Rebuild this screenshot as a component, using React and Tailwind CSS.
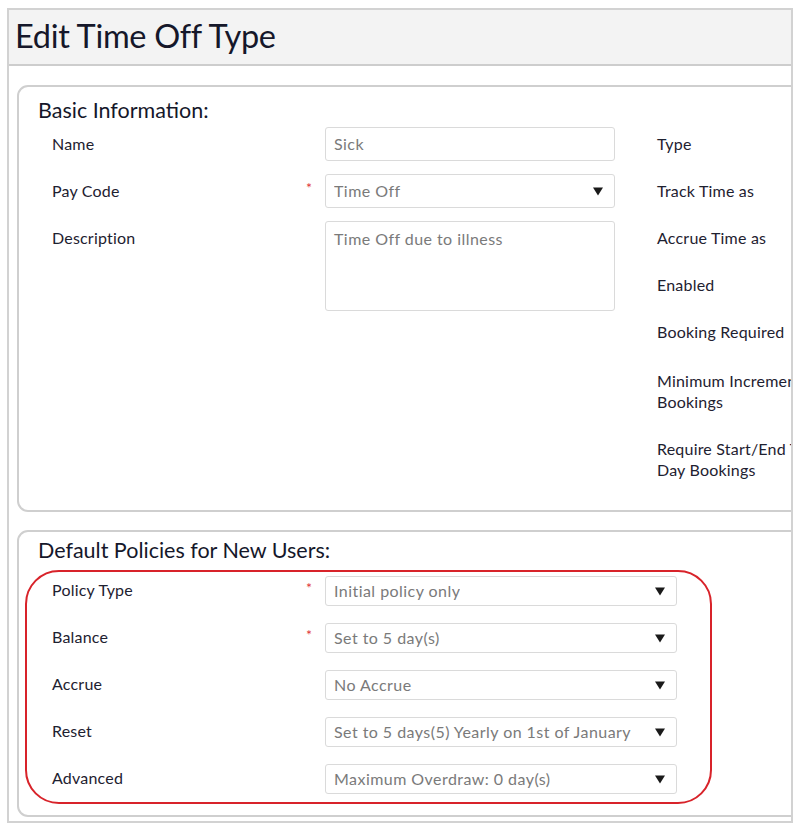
import React from "react";

const FONT = { fontFamily: "Lato, 'Liberation Sans', sans-serif" };

function Arrow() {
  return (
    <svg width="10" height="9" viewBox="0 0 10 9" className="shrink-0">
      <polygon points="0,0.5 10,0.5 5,8.5" fill="#1a1a1a" />
    </svg>
  );
}

function Star({ show }) {
  return (
    <div className="w-[20px] shrink-0 text-[#e0343a] text-[14px] leading-none pl-[1px] -mt-[6px]">
      {show ? "*" : ""}
    </div>
  );
}

function Field({ children, h = "h-[34px]", w = "w-[290px]", select = false }) {
  return (
    <div
      className={`${w} ${h} shrink-0 border-[1.5px] border-[#dadada] rounded-[3px] bg-white flex items-center justify-between pl-[8px] pr-[11px] text-[16px] text-[#7a7a7a] tracking-[0.45px]`}
    >
      <span className="truncate">{children}</span>
      {select && <Arrow />}
    </div>
  );
}

function Label({ children }) {
  return <div className="w-[253px] shrink-0 text-[16px] tracking-[0.2px] text-[#1e2130]">{children}</div>;
}

export default function App() {
  const rightLabels = [
    ["Type"],
    ["Track Time as"],
    ["Accrue Time as"],
    ["Enabled"],
    ["Booking Required"],
    ["Minimum Increment for Partial", "Bookings"],
    ["Require Start/End Time for Partial", "Day Bookings"],
  ];
  const policies = [
    ["Policy Type", true, "Initial policy only"],
    ["Balance", true, "Set to 5 day(s)"],
    ["Accrue", false, "No Accrue"],
    ["Reset", false, "Set to 5 days(5) Yearly on 1st of January"],
    ["Advanced", false, "Maximum Overdraw: 0 day(s)"],
  ];
  return (
    <div className="relative w-[800px] h-[834px] bg-white pt-[8px] pl-[7px]" style={FONT}>
      <div className="w-[786px] h-[815px] border-2 border-[#d2d2d2] overflow-hidden flex flex-col">
        <div className="h-[56px] shrink-0 bg-[#f3f3f3] border-b-2 border-[#cdcdcd] flex items-center pl-[6px]">
          <h1 className="text-[32.5px] text-[#15172a] tracking-[-0.3px] leading-none -mt-[2px]">Edit Time Off Type</h1>
        </div>
        <div className="flex-1 pt-[19px] pl-[8px] flex flex-col gap-[18px]">
          {/* Basic Information */}
          <section className="w-[820px] h-[427px] border-2 border-[#cfcfcf] rounded-l-[11px] pl-[19px] pt-[9px]">
            <h2 className="text-[21.5px] leading-[28px] text-[#15172a]">Basic Information:</h2>
            <div className="flex mt-[3px]">
              <div className="flex flex-col gap-[13px] pl-[14px]">
                <div className="flex items-center">
                  <Label>Name</Label>
                  <Star />
                  <Field>Sick</Field>
                </div>
                <div className="flex items-center">
                  <Label>Pay Code</Label>
                  <Star show />
                  <Field select>Time Off</Field>
                </div>
                <div className="flex items-start">
                  <Label>
                    <div className="mt-[5px]">Description</div>
                  </Label>
                  <Star />
                  <div className="w-[290px] h-[90px] border-[1.5px] border-[#dadada] rounded-[3px] pl-[8px] pt-[5px] text-[16px] text-[#7a7a7a] tracking-[0.45px]">
                    Time Off due to illness
                  </div>
                </div>
              </div>
              <div className="ml-[42px] pt-[6px] flex flex-col gap-[26px] text-[16px] tracking-[0.2px] leading-[21px] text-[#1e2130]">
                {rightLabels.map((l, i) => (
                  <div key={i} className={`whitespace-nowrap ${i === 5 ? "mt-[2px]" : ""}`}>
                    {l.map((t, j) => (
                      <div key={j}>{t}</div>
                    ))}
                  </div>
                ))}
              </div>
            </div>
          </section>
          {/* Default Policies */}
          <section className="w-[820px] h-[287px] border-2 border-[#cfcfcf] rounded-l-[11px] pl-[19px] pt-[4px]">
            <h2 className="text-[21.5px] leading-[28px] text-[#15172a]">Default Policies for New Users:</h2>
            <div className="flex flex-col gap-[17px] pl-[14px] mt-[12px]">
              {policies.map(([l, req, v]) => (
                <div key={l} className="flex items-center">
                  <Label>
                    <div className="-mt-[3px]">{l}</div>
                  </Label>
                  <Star show={req} />
                  <Field select h="h-[30px]" w="w-[352px]">
                    {v}
                  </Field>
                </div>
              ))}
            </div>
          </section>
        </div>
      </div>
      <div className="absolute left-[25px] top-[570px] w-[687px] h-[234px] border-2 border-[#d8232a] rounded-[34px] pointer-events-none" />
    </div>
  );
}
